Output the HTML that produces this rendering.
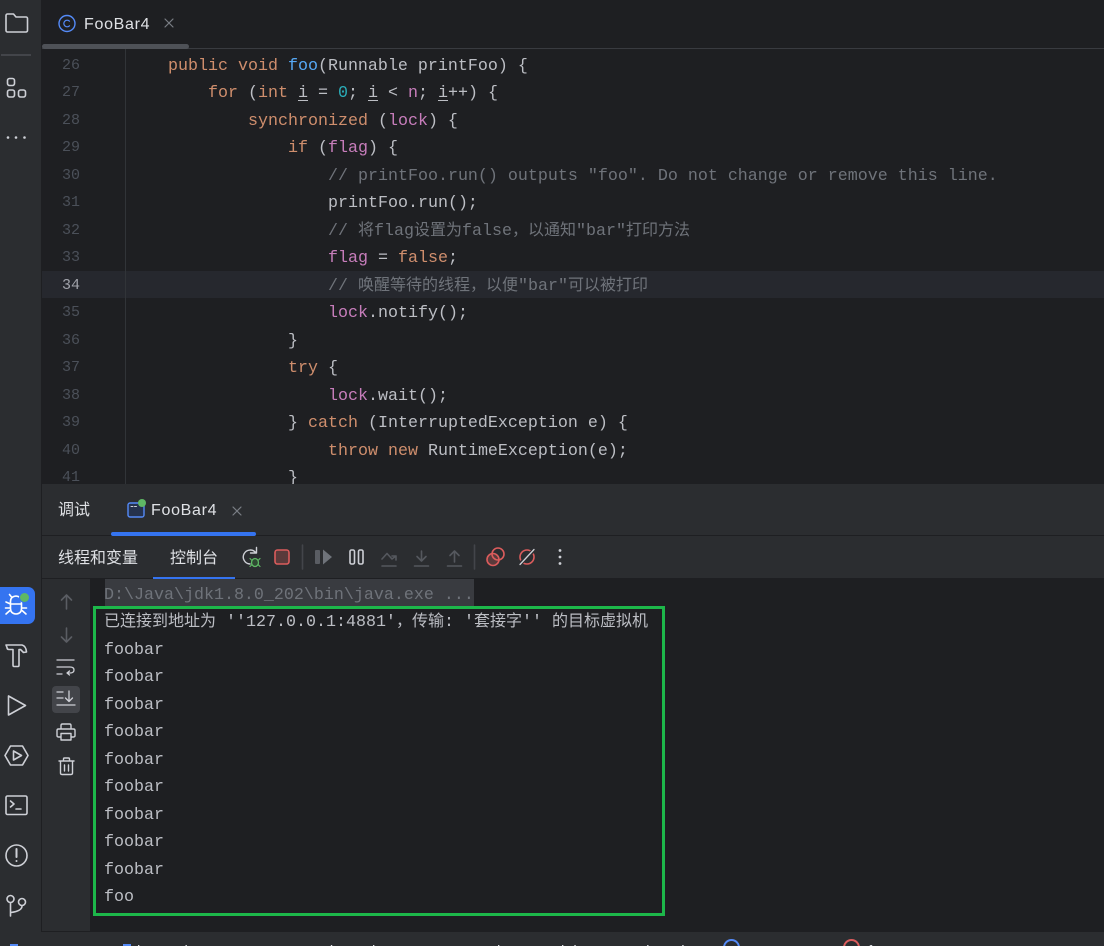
<!DOCTYPE html>
<html><head><meta charset="utf-8"><style>
html,body{margin:0;padding:0;background:#1e1f22}
#r{position:relative;width:1104px;height:946px;overflow:hidden;background:#1e1f22}
#r div{position:absolute}
.m{font-family:"Liberation Mono","Noto Sans CJK SC",monospace;font-size:16.67px;line-height:27px;white-space:pre;color:#bcbec4}
.m i{font-style:normal;font-size:16px}
.u{font-family:"Liberation Sans","Noto Sans CJK SC",sans-serif;font-size:16px;line-height:22px;white-space:pre;color:#dfe1e5}
.n{left:42px;width:38px;text-align:right;color:#4b5059;font-size:15px}
.k{color:#cf8e6d}.f{color:#56a8f5}.v{color:#c77dbb}.c{color:#6f737a}.g{color:#2aacb8}.l{text-decoration:underline;text-underline-offset:3px}
.s{font-size:15px;color:#a8adbd}
.t{font-size:15px}
svg{position:absolute;fill:none;stroke:#ced0d6;stroke-width:1.6;stroke-linecap:round;stroke-linejoin:round;overflow:visible}
</style></head><body><div id="r">

<div style="left:0;top:0;width:41px;height:932px;background:#2b2d30"></div>
<div style="left:41px;top:0;width:1px;height:932px;background:#1e1f22"></div>
<div style="left:1px;top:54px;width:30px;height:2px;background:#43454a"></div>

<svg style="left:0;top:0" width="41" height="932" viewBox="0 0 41 932">
<path d="M6 15.5a1.5 1.5 0 0 1 1.5-1.5h6l2.5 3h10a1.5 1.5 0 0 1 1.5 1.5v12a1.5 1.5 0 0 1-1.5 1.5h-18.500a1.5 1.5 0 0 1-1.5-1.5z"/>
<rect x="7.5" y="78.5" width="7" height="7" rx="2"/><rect x="7.5" y="90" width="7" height="7" rx="2"/><rect x="18.5" y="90" width="7" height="7" rx="2"/>
<circle cx="8" cy="137.5" r="1.3" fill="#ced0d6" stroke="none"/><circle cx="16" cy="137.5" r="1.3" fill="#ced0d6" stroke="none"/><circle cx="24.5" cy="137.5" r="1.3" fill="#ced0d6" stroke="none"/>
<path d="M6 645h16q4 1 4.5 7l-3 .5-3-3h-1.500v15.500q0 1.500-1 1.500h-4q-1 0-1-1.500v-15.500h-4q-2 0-2-2z"/>
<path d="M8.500 696v19l17-9.500z"/>
<path d="M10.5 746h12l5.500 9.500-5.500 9.500h-12l-5.500-9.500z"/><path d="M13.5 751v9l8-4.500z"/>
<rect x="6" y="796" width="21" height="18.5" rx="1.5"/><path d="M10.5 801l3.5 3-3.5 3M16 809h5"/>
<circle cx="16.5" cy="855.5" r="10.5"/><path d="M16.5 849v8" stroke-width="2"/><circle cx="16.5" cy="861" r="1" fill="#ced0d6" stroke="none"/>
<circle cx="10.5" cy="899" r="3.5"/><circle cx="22" cy="902" r="3.5"/><path d="M10.5 903v13M22 906q0 5-11 6.5"/>
</svg>

<div style="left:0;top:587px;width:35px;height:37px;background:#3574f0;border-radius:0 7px 7px 0"></div>
<svg style="left:0;top:580px;stroke:#fff" width="41" height="50" viewBox="0 0 41 50">
<path d="M10.500 21.500q0-5 5.500-5.500q5.500 .5 5.500 5.500v7q0 5-5.500 5.500q-5.500-.5-5.500-5.500zM10.500 24h11M10.500 24l-4.500-2M10.500 28h-5M10.500 30l-4.500 4M21.500 30l4.500 4M21.500 28h5M11.500 17l-2-2.500"/>
</svg>
<div style="left:20px;top:593px;width:9px;height:9px;border-radius:50%;background:#5fb865;box-shadow:0 0 0 1px #3574f0"></div>

<div style="left:42px;top:0;width:1062px;height:48px;background:#1e1f22"></div>
<div style="left:42px;top:48px;width:1062px;height:1px;background:#393b40"></div>
<div style="left:42px;top:44px;width:147px;height:5px;background:#4e5157;border-radius:3px"></div>
<svg style="left:58px;top:15px;stroke:#548af7;stroke-width:1.4" width="18" height="18" viewBox="0 0 18 18"><circle cx="9" cy="8.5" r="8"/><path d="M11.5 6.2a3.300 3.300 0 1 0 0 4.600" stroke-width="1.2"/></svg>
<div class="u" style="left:84px;top:13px;line-height:24px;letter-spacing:.7px">FooBar4</div>
<svg style="left:164px;top:18px;stroke:#7a7e85;stroke-width:1.2" width="10" height="10" viewBox="0 0 10 10"><path d="M1 1l8 8M9 1l-8 8"/></svg>

<div style="left:42px;top:271px;width:1062px;height:27px;background:#26282e"></div>
<div style="left:125px;top:49px;width:1px;height:435px;background:#313438"></div>

<div class="m n" style="top:52px">26</div><div class="m n" style="top:79px">27</div><div class="m n" style="top:107px">28</div><div class="m n" style="top:134px">29</div><div class="m n" style="top:162px">30</div><div class="m n" style="top:189px">31</div><div class="m n" style="top:217px">32</div><div class="m n" style="top:244px">33</div><div class="m n" style="top:272px;color:#a1a3ab">34</div><div class="m n" style="top:299px">35</div><div class="m n" style="top:327px">36</div><div class="m n" style="top:354px">37</div><div class="m n" style="top:382px">38</div><div class="m n" style="top:409px">39</div><div class="m n" style="top:437px">40</div><div class="m n" style="top:464px">41</div>

<div class="m" style="left:168px;top:53px"><span class="k">public void</span> <span class="f">foo</span>(Runnable printFoo) {</div>
<div class="m" style="left:208px;top:80px"><span class="k">for</span> (<span class="k">int</span> <span class="l">i</span> = <span class="g">0</span>; <span class="l">i</span> &lt; <span class="v">n</span>; <span class="l">i</span>++) {</div>
<div class="m" style="left:248px;top:108px"><span class="k">synchronized</span> (<span class="v">lock</span>) {</div>
<div class="m" style="left:288px;top:135px"><span class="k">if</span> (<span class="v">flag</span>) {</div>
<div class="m c" style="left:328px;top:163px">// printFoo.run() outputs "foo". Do not change or remove this line.</div>
<div class="m" style="left:328px;top:190px">printFoo.run();</div>
<div class="m c" style="left:328px;top:218px">// <i>将</i>flag<i>设置为</i>false<i>，以通知</i>"bar"<i>打印方法</i></div>
<div class="m" style="left:328px;top:245px"><span class="v">flag</span> = <span class="k">false</span>;</div>
<div class="m c" style="left:328px;top:273px">// <i>唤醒等待的线程，以便</i>"bar"<i>可以被打印</i></div>
<div class="m" style="left:328px;top:300px"><span class="v">lock</span>.notify();</div>
<div class="m" style="left:288px;top:328px">}</div>
<div class="m" style="left:288px;top:355px"><span class="k">try</span> {</div>
<div class="m" style="left:328px;top:383px"><span class="v">lock</span>.wait();</div>
<div class="m" style="left:288px;top:410px">} <span class="k">catch</span> (InterruptedException e) {</div>
<div class="m" style="left:328px;top:438px"><span class="k">throw new</span> RuntimeException(e);</div>
<div class="m" style="left:288px;top:465px">}</div>

<div style="left:42px;top:484px;width:1062px;height:95px;background:#2b2d30"></div>
<div style="left:42px;top:535px;width:1062px;height:1px;background:#1e1f22"></div>
<div style="left:42px;top:578px;width:1062px;height:1px;background:#1e1f22"></div>
<div class="u" style="left:58px;top:500px">调试</div>
<svg style="left:127px;top:502px;stroke:#548af7;stroke-width:1.4" width="18" height="16" viewBox="0 0 18 16"><rect x="1" y="1" width="16" height="14" rx="2" fill="#25324d"/><path d="M4 4.5h2M7.5 4.5h2" stroke="#ced0d6" stroke-width="1"/></svg>
<div style="left:138px;top:499px;width:8px;height:8px;border-radius:50%;background:#5fb865"></div>
<div class="u" style="left:151px;top:500px;letter-spacing:.7px">FooBar4</div>
<svg style="left:232px;top:506px;stroke:#7a7e85;stroke-width:1.2" width="10" height="10" viewBox="0 0 10 10"><path d="M1 1l8 8M9 1l-8 8"/></svg>
<div style="left:111px;top:532px;width:145px;height:4px;background:#3574f0;border-radius:2px"></div>
<div class="u" style="left:58px;top:548px">线程和变量</div>
<div class="u" style="left:170px;top:548px">控制台</div>
<div style="left:153px;top:577px;width:82px;height:2px;background:#3574f0"></div>

<svg style="left:230px;top:530px" width="350" height="48" viewBox="0 0 350 48">
<path d="M26 23a7 7 0 1 0-6 11M20.5 23h6v-5.500" stroke-width="1.4"/>
<ellipse cx="25" cy="32.5" rx="3.500" ry="4" stroke="#5fb865" stroke-width="1.3" fill="#2f4a33"/><path d="M21.500 30l-1.500-1.500M28.500 30l1.500-1.500M21.500 35l-1.500 1.500M28.500 35l1.500 1.500" stroke="#5fb865" stroke-width="1.2"/>
<rect x="45" y="20" width="14" height="14" rx="2.5" fill="#5a3a3b" stroke="#db5c5c"/>
<path d="M72.500 15v24" stroke="#43454a"/>
<rect x="85" y="20" width="5" height="14" fill="#5a5d63" stroke="none" rx="1"/><path d="M93 19.5l9 7.5-9 7.5z" fill="#6f737a" stroke="none"/>
<rect x="120" y="20" width="4.5" height="14" rx="1.5"/><rect x="128.5" y="20" width="4.5" height="14" rx="1.5"/>
<g stroke="#55585e"><path d="M152 36h14M152 29l5-5.500 5 5.500 4-3M166 30v-4h-4"/><path d="M184.500 36h14M191.500 21v10M187 26.500l4.500 4.500 4.500-4.500"/><path d="M217.500 36h14M224.500 32v-11M220 25.500l4.500-4.500 4.500 4.500"/></g>
<path d="M244.500 15v24" stroke="#43454a"/>
<circle cx="263" cy="29.500" r="6" stroke="#db5c5c" fill="#5a3a3b"/><circle cx="268" cy="24" r="6" stroke="#db5c5c"/>
<circle cx="297" cy="27" r="7" stroke="#db5c5c"/><path d="M289 35l16-16" stroke="#2b2d30" stroke-width="4"/><path d="M290 34.5l14-15" stroke="#ced0d6" stroke-width="1.3"/>
<g fill="#ced0d6" stroke="none"><circle cx="330" cy="20.5" r="1.4"/><circle cx="330" cy="27" r="1.4"/><circle cx="330" cy="33.5" r="1.4"/></g>
</svg>

<div style="left:42px;top:579px;width:48px;height:353px;background:#2b2d30"></div>
<div style="left:42px;top:931px;width:1062px;height:1px;background:#1e1f22"></div>
<div style="left:90px;top:579px;width:1014px;height:352px;background:#1e1f22"></div>
<div style="left:52px;top:686px;width:28px;height:27px;background:#43454a;border-radius:4px"></div>
<svg style="left:42px;top:580px" width="48" height="200" viewBox="0 0 48 200">
<g stroke="#5a5d63"><path d="M24.5 29v-14M19.5 20l5-5 5 5"/><path d="M24.5 48v14M19.5 57l5 5 5-5"/></g>
<path d="M15 80h17M15 87h13q4 0 4 3t-4 3h-3M27.5 91l-2.5 2 2.5 2M15 94h5" stroke-width="1.3"/>
<path d="M15 112h6M15 118h6M15 125h18M27 111v10M23.5 118l3.5 3.5 3.5-3.5" stroke-width="1.3"/>
<path d="M19 149v-3.500q0-1.500 1.500-1.500h7q1.500 0 1.500 1.500v3.500M19 157h-2.500q-1.500 0-1.500-1.500v-5q0-1.500 1.500-1.500h15q1.500 0 1.500 1.500v5q0 1.500-1.500 1.500h-2.500M19 153.500h10v6.500h-10z" stroke-width="1.4"/>
<path d="M17 181h15M21.500 181v-2q0-1 1-1h4q1 0 1 1v2M18.500 181v12q0 1.500 1.500 1.500h9q1.500 0 1.500-1.500v-12M22.500 185v6M26.500 185v6" stroke-width="1.4"/>
</svg>

<div style="left:105px;top:579px;width:369px;height:27px;background:#393b40"></div>
<div class="m" style="left:104px;top:582px;color:#6f737a">D:\Java\jdk1.8.0_202\bin\java.exe ...</div>
<div class="m" style="left:104px;top:609px"><i>已连接到地址为</i> ''127.0.0.1:4881'<i>，传输</i>: '<i>套接字</i>'' <i>的目标虚拟机</i></div>
<div class="m" style="left:104px;top:637px">foobar</div>
<div class="m" style="left:104px;top:664px">foobar</div>
<div class="m" style="left:104px;top:692px">foobar</div>
<div class="m" style="left:104px;top:719px">foobar</div>
<div class="m" style="left:104px;top:747px">foobar</div>
<div class="m" style="left:104px;top:774px">foobar</div>
<div class="m" style="left:104px;top:802px">foobar</div>
<div class="m" style="left:104px;top:829px">foobar</div>
<div class="m" style="left:104px;top:857px">foobar</div>
<div class="m" style="left:104px;top:884px">foo</div>
<div style="left:93px;top:606px;width:566px;height:304px;border:3px solid #1db74a"></div>

<div style="left:0;top:932px;width:1104px;height:14px;background:#2b2d30;overflow:hidden">
<div style="left:10px;top:12px;width:8px;height:8px;background:#548af7"></div>
<div class="u t" style="left:27px;top:9px">M</div>
<div class="u t" style="left:50px;top:9px">Demo</div>
<div class="u s" style="left:103px;top:9px">›</div>
<div style="left:123px;top:12px;width:8px;height:8px;background:#548af7"></div>
<div class="u t" style="left:137px;top:9px;letter-spacing:3px">java-l</div>
<div class="u s" style="left:230px;top:9px">›</div>
<div class="u s" style="left:285px;top:9px">›</div>
<div class="u t" style="left:309px;top:9px">main</div>
<div class="u s" style="left:353px;top:9px">›</div>
<div class="u t" style="left:372px;top:9px">java</div>
<div class="u s" style="left:413px;top:9px">›</div>
<div class="u s" style="left:476px;top:9px">›</div>
<div class="u t" style="left:497px;top:9px">lc</div>
<div class="u s" style="left:531px;top:9px">›</div>
<div class="u t" style="left:561px;top:9px;letter-spacing:4px">ide</div>
<div class="u s" style="left:621px;top:9px">›</div>
<div class="u t" style="left:642px;top:9px">thread</div>
<div class="u s" style="left:703px;top:9px">›</div>
<div style="left:723px;top:7px;width:13px;height:13px;border:2px solid #548af7;border-radius:50%"></div>
<div class="u t" style="left:747px;top:9px;letter-spacing:2.5px">FooBar4</div>
<div class="u s" style="left:823px;top:9px">›</div>
<div style="left:843px;top:7px;width:13px;height:13px;border:2px solid #db5c5c;border-radius:50%"></div>
<div class="u t" style="left:868px;top:9px">foo</div>
</div>
</div></body></html>
